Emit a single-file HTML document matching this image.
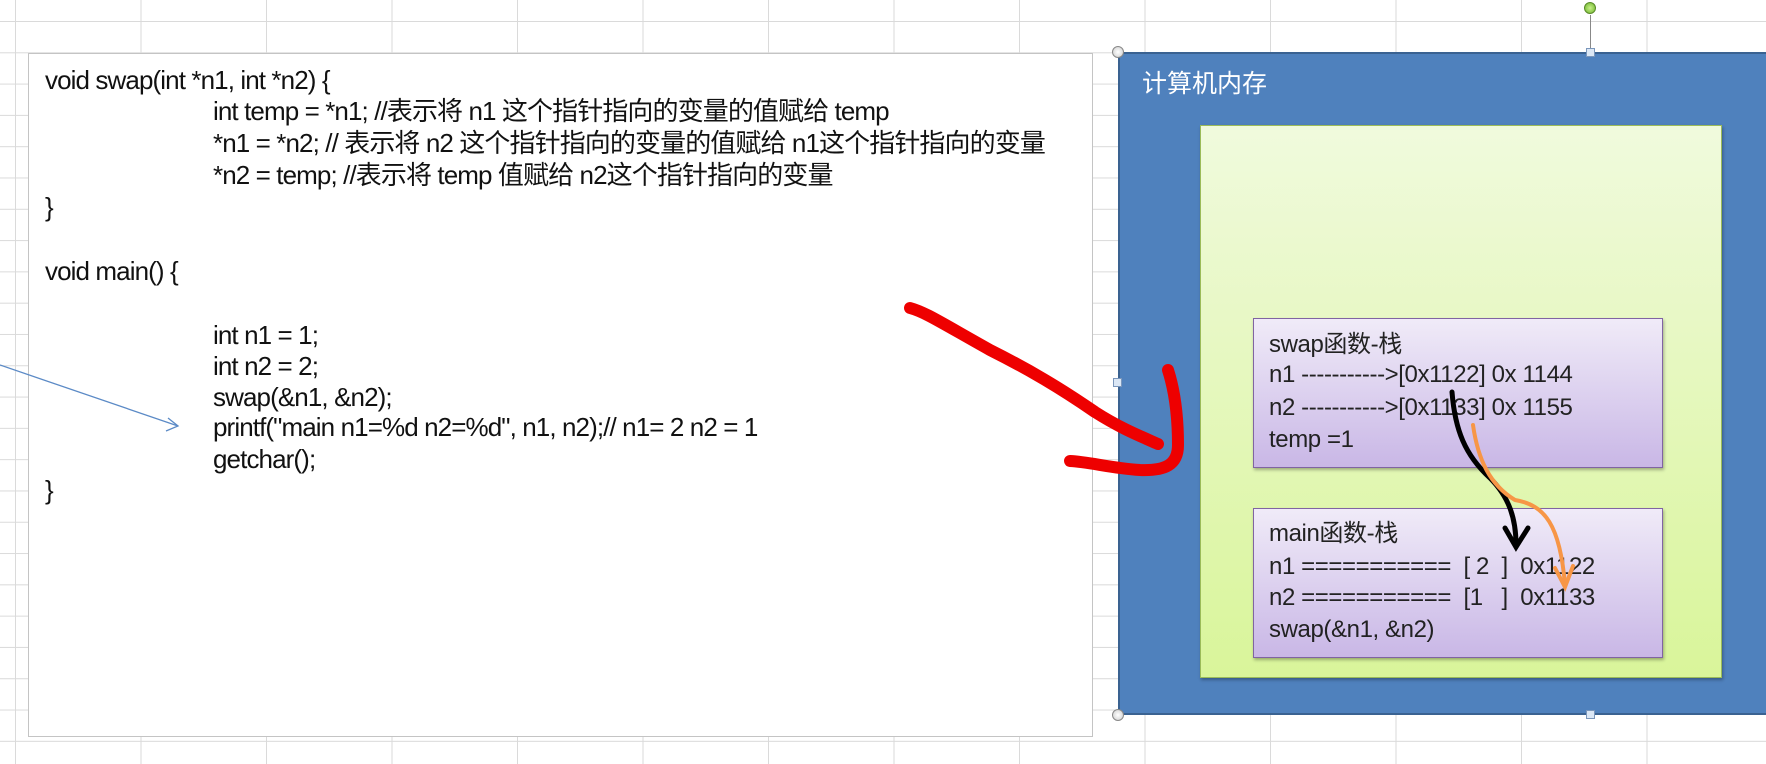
<!DOCTYPE html>
<html><head><meta charset="utf-8"><style>
html,body{margin:0;padding:0}
body{width:1766px;height:764px;position:relative;overflow:hidden;background:#fff;
background-image:linear-gradient(to right,#dadada 1px,transparent 1px),linear-gradient(to bottom,#dadada 1px,transparent 1px);
background-size:125.5px 31.3px;background-position:15px 21px;
font-family:"Liberation Sans","Noto Sans CJK SC",sans-serif}
.code{position:absolute;left:28px;top:53px;width:1065px;height:684px;background:#fff;border:1px solid #c4c4c4;box-sizing:border-box}
.l{position:absolute;font-size:26px;color:#111;white-space:pre;line-height:28px;letter-spacing:-0.9px}
.mem{position:absolute;left:1118px;top:52px;width:660px;height:663px;background:#4f81bd;border:2px solid #3a6291;box-sizing:border-box}
.green{position:absolute;left:1200px;top:125px;width:522px;height:553px;background:linear-gradient(#f0fadd,#d9f59a);border:1px solid #9bbb59;box-sizing:border-box;box-shadow:1px 2px 3px rgba(0,0,0,.3)}
.st{position:absolute;left:1253px;width:410px;height:150px;background:linear-gradient(#f0ebf8,#c9b7e6);border:1px solid #8064a2;box-sizing:border-box;box-shadow:1px 2px 3px rgba(0,0,0,.3)}
.t{position:absolute;left:1269px;font-size:24px;color:#222;white-space:pre;line-height:26px;letter-spacing:-0.4px}
.title{position:absolute;left:1142px;top:64px;color:#fff;font-size:25px}
.h{position:absolute;width:12px;height:12px;border-radius:50%;background:radial-gradient(#fff,#ccc);border:1px solid #888;box-sizing:border-box}
.sq{position:absolute;width:9px;height:9px;background:#dbe7f5;border:1px solid #7a96bb;box-sizing:border-box}
</style></head><body>
<div class="code"></div>
<div class="l" style="left:45px;top:66px">void swap(int *n1, int *n2) {</div>
<div class="l" style="left:213px;top:97px">int temp = *n1; //表示将 n1 这个指针指向的变量的值赋给 temp</div>
<div class="l" style="left:213px;top:129px">*n1 = *n2; // 表示将 n2 这个指针指向的变量的值赋给 n1这个指针指向的变量</div>
<div class="l" style="left:213px;top:161px">*n2 = temp; //表示将 temp 值赋给 n2这个指针指向的变量</div>
<div class="l" style="left:45px;top:193px">}</div>
<div class="l" style="left:45px;top:257px">void main() {</div>
<div class="l" style="left:213px;top:321px">int n1 = 1;</div>
<div class="l" style="left:213px;top:352px">int n2 = 2;</div>
<div class="l" style="left:213px;top:383px">swap(&amp;n1, &amp;n2);</div>
<div class="l" style="left:213px;top:413px">printf("main n1=%d n2=%d", n1, n2);// n1= 2 n2 = 1</div>
<div class="l" style="left:213px;top:445px">getchar();</div>
<div class="l" style="left:45px;top:476px">}</div>

<div class="mem"></div>
<div class="title">计算机内存</div>
<div class="green"></div>
<div class="st" style="top:318px"></div>
<div class="st" style="top:508px"></div>
<div class="t" style="top:332px">swap函数-栈</div>
<div class="t" style="top:362px">n1 -----------&gt;[0x1122] 0x 1144</div>
<div class="t" style="top:395px">n2 -----------&gt;[0x1133] 0x 1155</div>
<div class="t" style="top:427px">temp =1</div>
<div class="t" style="top:521px">main函数-栈</div>
<div class="t" style="top:554px">n1 ===========  [ 2  ]  0x1122</div>
<div class="t" style="top:585px">n2 ===========  [1   ]  0x1133</div>
<div class="t" style="top:617px">swap(&amp;n1, &amp;n2)</div>

<div class="h" style="left:1112px;top:46px"></div>
<div class="h" style="left:1112px;top:709px"></div>
<div style="position:absolute;left:1590px;top:15px;width:1px;height:35px;background:#888"></div>
<div class="h" style="left:1584px;top:2px;background:radial-gradient(#c9f08a,#6cb52a);border-color:#5a8a2a"></div>
<div class="sq" style="left:1586px;top:48px"></div>
<div class="sq" style="left:1113px;top:378px"></div>
<div class="sq" style="left:1586px;top:710px"></div>

<svg width="1766" height="764" style="position:absolute;left:0;top:0">
<path d="M0,365 L178,426" stroke="#5b8ac6" stroke-width="1.3" fill="none"/>
<path d="M168,418 L178,426 L166,431" stroke="#5b8ac6" stroke-width="1.3" fill="none"/>
<path d="M910,308 C925,312 940,322 990,350 C1030,370 1060,388 1095,412 C1120,428 1140,436 1158,444" stroke="#ee0000" stroke-width="12" stroke-linecap="round" fill="none"/>
<path d="M1168,370 C1176,395 1178,420 1178,445 C1178,465 1165,471 1140,470 C1110,468 1090,462 1070,461" stroke="#ee0000" stroke-width="12" stroke-linecap="round" fill="none"/>
<path d="M1452,392 C1455,430 1465,455 1490,478 C1510,498 1516,520 1516,545" stroke="#000" stroke-width="5" fill="none" stroke-linecap="round"/>
<path d="M1505,528 L1516,547 L1528,528" stroke="#000" stroke-width="5" fill="none" stroke-linecap="round"/>
<path d="M1473,425 C1478,460 1490,485 1515,500 C1545,505 1560,525 1565,585" stroke="#f79646" stroke-width="4" fill="none" stroke-linecap="round"/>
<path d="M1555,568 L1565,587 L1573,566" stroke="#f79646" stroke-width="4" fill="none" stroke-linecap="round"/>
</svg>
</body></html>
